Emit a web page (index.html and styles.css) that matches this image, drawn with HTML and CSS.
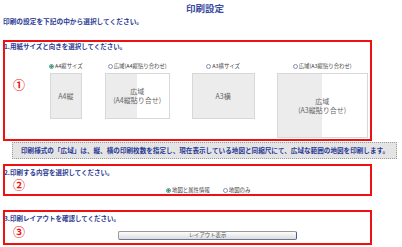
FILE: index.html
```html
<!DOCTYPE html>
<html lang="ja">
  <head>
    <meta charset="UTF-8" />
    <meta name="viewport" content="width=device-width, initial-scale=1.0" />
    <title>印刷設定</title>
    <link rel="stylesheet" href="styles.css">
  </head>
  <body>
    <div class="title">印刷設定</div>
    <div class="intro">印刷の設定を下記の中から選択してください。</div>

    <!-- 1. paper size -->
    <div class="step step-paper">
      <div class="step-head">1.用紙サイズと向きを選択してください。</div>
      <div class="step-body">
        <div class="num">①</div>
        <div class="papers">
          <div class="paper-col">
            <label class="opt"><span class="radio checked"></span>A4縦サイズ</label>
            <div class="paper a4">A4縦</div>
          </div>
          <div class="paper-col">
            <label class="opt"><span class="radio"></span>広域(A4縦貼り合わせ)</label>
            <div class="paper wide-a4"><span>広域</span><span>(A4縦貼り合せ)</span></div>
          </div>
          <div class="paper-col">
            <label class="opt"><span class="radio"></span>A3横サイズ</label>
            <div class="paper a3">A3横</div>
          </div>
          <div class="paper-col">
            <label class="opt"><span class="radio"></span>広域(A3縦貼り合わせ)</label>
            <div class="paper wide-a3"><span>広域</span><span>(A3縦貼り合せ)</span></div>
          </div>
        </div>
      </div>
    </div>

    <div class="note">印刷様式の「広域」は、縦、横の印刷枚数を指定し、現在表示している地図と同縮尺にて、広域な範囲の地図を印刷します。</div>

    <!-- 2. contents -->
    <div class="step step-content">
      <div class="step-head">2.印刷する内容を選択してください。</div>
      <div class="step-body">
        <div class="num num-2">②</div>
        <div class="contents">
          <label class="opt"><span class="radio checked"></span>地図と属性情報</label>
          <label class="opt"><span class="radio"></span>地図のみ</label>
        </div>
      </div>
    </div>

    <!-- 3. layout -->
    <div class="step step-layout">
      <div class="step-head">3.印刷レイアウトを確認してください。</div>
      <div class="step-body">
        <div class="num num-3">③</div>
        <button class="show-btn" type="button">レイアウト表示</button>
      </div>
    </div>
  </body>
</html>
```

FILE: styles.css
```css
* {
  box-sizing: border-box;
}
body {
  margin: 0;
  width: 402px;
  background-color: #fff;
  font-family: "Noto Sans CJK JP", "DejaVu Sans", sans-serif;
  color: #2b3a94;
}
.title {
  height: 17px;
  line-height: 16px;
  padding-left: 8px;
  text-align: center;
  font-size: 9.5px;
  font-weight: bold;
  color: #3a4aa0;
}
.intro {
  height: 8px;
  line-height: 8px;
  padding-left: 3px;
  font-size: 6.7px;
  font-weight: bold;
  white-space: nowrap;
}
.step {
  margin-left: 3px;
  width: 369px;
  border: 2px solid #ee1111;
}
.step-head {
  height: 8px;
  line-height: 8px;
  margin-left: -1px;
  font-size: 6.5px;
  font-weight: bold;
  white-space: nowrap;
}
.step-body {
  display: flex;
  align-items: flex-start;
}
.num {
  width: 44px;
  flex: none;
  padding-left: 8px;
  line-height: 12px;
  font-size: 12px;
  font-weight: bold;
  color: #ee1111;
}

/* step 1 */
.step-paper {
  margin-top: 15px;
  height: 101px;
}
.step-paper .num {
  padding-top: 29px;
}
.papers {
  display: flex;
  gap: 22px;
  padding-top: 12px;
}
.paper-col {
  display: flex;
  flex-direction: column;
  align-items: center;
}
.opt {
  display: flex;
  align-items: center;
  gap: 1px;
  height: 8px;
  font-size: 5.4px;
  color: #444;
  white-space: nowrap;
}
.radio {
  width: 5px;
  height: 5px;
  border: 1px solid #8391b0;
  border-radius: 50%;
  background-color: #fff;
}
.radio.checked {
  border-color: #4f9d86;
  background: radial-gradient(circle, #3a9a7c 0 1px, #fff 1.3px);
}
.paper {
  margin-top: 3px;
  display: flex;
  flex-direction: column;
  align-items: center;
  justify-content: center;
  text-align: center;
  font-size: 7px;
  line-height: 9px;
  color: #666;
  background-color: #ececec;
  border: 1px solid #d8d8d8;
}
.a4 {
  width: 32px;
  height: 46px;
}
.wide-a4 {
  width: 65px;
  height: 46px;
  background: linear-gradient(to right, #ececec 50%, #fff 50%);
}
.a3 {
  width: 63px;
  height: 46px;
}
.wide-a3 {
  width: 91px;
  height: 65px;
  background: linear-gradient(to right, #ececec 50%, #fff 50%);
}

/* note */
.note {
  margin: 1px 0 0 12px;
  width: 385px;
  height: 17px;
  line-height: 15px;
  padding-left: 8px;
  font-size: 6.6px;
  font-weight: bold;
  white-space: nowrap;
  background-color: #e4e4e4;
  border: 1px dotted #9a9a9a;
}

/* step 2 */
.step-content {
  margin-top: 5px;
  height: 32px;
}
.step-content .step-head {
  margin-top: 2px;
}
.num-2 {
  padding-top: 3px;
}
.contents {
  display: flex;
  gap: 13px;
  padding: 10px 0 0 117px;
}

/* step 3 */
.step-layout {
  margin-top: 14px;
  height: 35px;
}
.step-layout .step-head {
  margin-top: 2px;
}
.num-3 {
  padding-top: 4px;
}
.show-btn {
  margin: 9px 0 0 69px;
  width: 179px;
  height: 9px;
  padding: 0;
  font-family: inherit;
  font-size: 5.4px;
  line-height: 7px;
  color: #555;
  border: 1px solid #9a9a9a;
  border-right-color: #4b5a80;
  border-bottom-color: #6a7590;
  border-radius: 2px;
  background: linear-gradient(#fdfdfd, #dcdcdc);
}
```
